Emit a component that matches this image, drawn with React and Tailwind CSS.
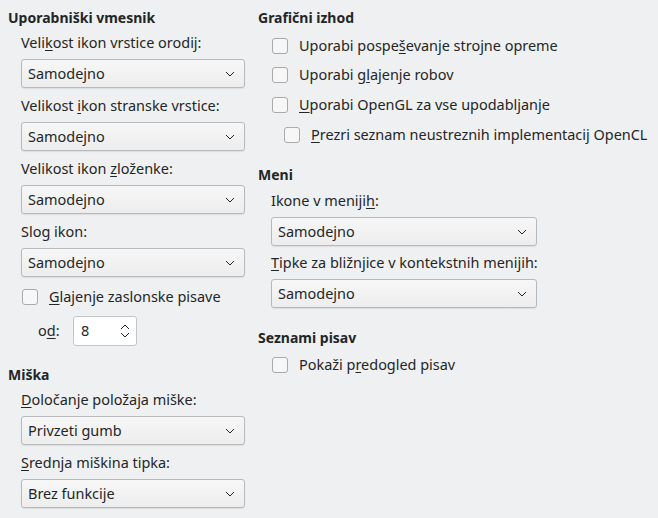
import React from 'react'

function Chevron() {
  return (
    <svg width="10" height="6" viewBox="0 0 10 6" className="text-[#232627]">
      <path d="M1 1 L5 5 L9 1" fill="none" stroke="currentColor" strokeWidth="1" />
    </svg>
  )
}

function Combo({ value, width, className = '' }) {
  return (
    <div
      className={`flex h-[29px] items-center justify-between rounded-[3px] border border-[#b8b9ba] bg-gradient-to-b from-[#f7f7f7] to-[#ededed] pl-[6px] pr-[9px] shadow-[0_1px_1px_rgba(0,0,0,0.08)] ${width} ${className}`}
    >
      <span>{value}</span>
      <Chevron />
    </div>
  )
}

function Check({ children, className = '' }) {
  return (
    <div className={`flex h-5 items-center ${className}`}>
      <div className="h-4 w-4 rounded-[3px] border border-[#a9aaab] bg-[#f7f7f7]" />
      <span className="ml-[11px] whitespace-nowrap">{children}</span>
    </div>
  )
}

function Heading({ children, className = '' }) {
  return <div className={`h-5 whitespace-nowrap text-[14px] font-bold leading-5 ${className}`}>{children}</div>
}

function Label({ children, className = '' }) {
  return <div className={`h-5 whitespace-nowrap leading-5 ${className}`}>{children}</div>
}

const u = (c) => <span className="underline underline-offset-2">{c}</span>

export default function App() {
  return (
    <div className="flex h-[518px] w-[658px] bg-[#eff0f1] font-['Noto_Sans',sans-serif] text-[14.45px] text-[#232627]">
      <div className="ml-[8px] flex w-[250px] flex-col">
        <Heading className="mt-[8px]">Uporabniški vmesnik</Heading>
        <div className="ml-[13px] flex flex-col">
          <Label className="mt-[5px]">Veli{u('k')}ost ikon vrstice orodij:</Label>
          <Combo value="Samodejno" width="w-[224px]" className="mt-[6px]" />
          <Label className="mt-2">Velikost {u('i')}kon stranske vrstice:</Label>
          <Combo value="Samodejno" width="w-[224px]" className="mt-[6px]" />
          <Label className="mt-2">Velikost ikon {u('z')}loženke:</Label>
          <Combo value="Samodejno" width="w-[224px]" className="mt-[6px]" />
          <Label className="mt-2">Slo{u('g')} ikon:</Label>
          <Combo value="Samodejno" width="w-[224px]" className="mt-[6px]" />
          <Check className="mt-[10px] ml-px">{u('G')}lajenje zaslonske pisave</Check>
          <div className="mt-[9px] flex h-[30px] items-center">
            <span className="ml-[17px] w-[35px]">o{u('d')}:</span>
            <div className="flex h-[30px] w-[64px] items-center justify-between rounded-[3px] border border-[#c4c5c6] bg-white pl-[7px] pr-[6px]">
              <span>8</span>
              <svg width="10" height="16" viewBox="0 0 10 16" className="text-[#232627]">
                <path d="M1 6 L5 2 L9 6 M1 10 L5 14 L9 10" fill="none" stroke="currentColor" strokeWidth="1" />
              </svg>
            </div>
          </div>
        </div>
        <Heading className="mt-[19px]">Miška</Heading>
        <div className="ml-[13px] flex flex-col">
          <Label className="mt-[5px]">{u('D')}oločanje položaja miške:</Label>
          <Combo value="Privzeti gumb" width="w-[224px]" className="mt-[6px]" />
          <Label className="mt-2">{u('S')}rednja miškina tipka:</Label>
          <Combo value="Brez funkcije" width="w-[224px]" className="mt-[6px]" />
        </div>
      </div>

      <div className="flex flex-1 flex-col">
        <Heading className="mt-[8px]">Grafični izhod</Heading>
        <div className="ml-[14px] flex flex-col">
          <Check className="mt-[7px] h-[22px]">Uporabi pospe{u('š')}evanje strojne opreme</Check>
          <Check className="mt-[7px] h-[22px]">Uporabi g{u('l')}ajenje robov</Check>
          <Check className="mt-[8px] h-[22px]">{u('U')}porabi OpenGL za vse upodabljanje</Check>
          <Check className="ml-[12px] mt-[8px] h-[22px]">{u('P')}rezri seznam neustreznih implementacij OpenCL</Check>
        </div>
        <Heading className="mt-[19px]">Meni</Heading>
        <div className="ml-[13px] flex flex-col">
          <Label className="mt-[6px]">Ikone v meniji{u('h')}:</Label>
          <Combo value="Samodejno" width="w-[266px]" className="mt-[6px]" />
          <Label className="mt-[7px]">{u('T')}ipke za bližnjice v kontekstnih menijih:</Label>
          <Combo value="Samodejno" width="w-[266px]" className="mt-[6px]" />
        </div>
        <Heading className="mt-[20px]">Seznami pisav</Heading>
        <div className="ml-[14px] flex flex-col">
          <Check className="mt-[7px]">Pokaži p{u('r')}edogled pisav</Check>
        </div>
      </div>
    </div>
  )
}
